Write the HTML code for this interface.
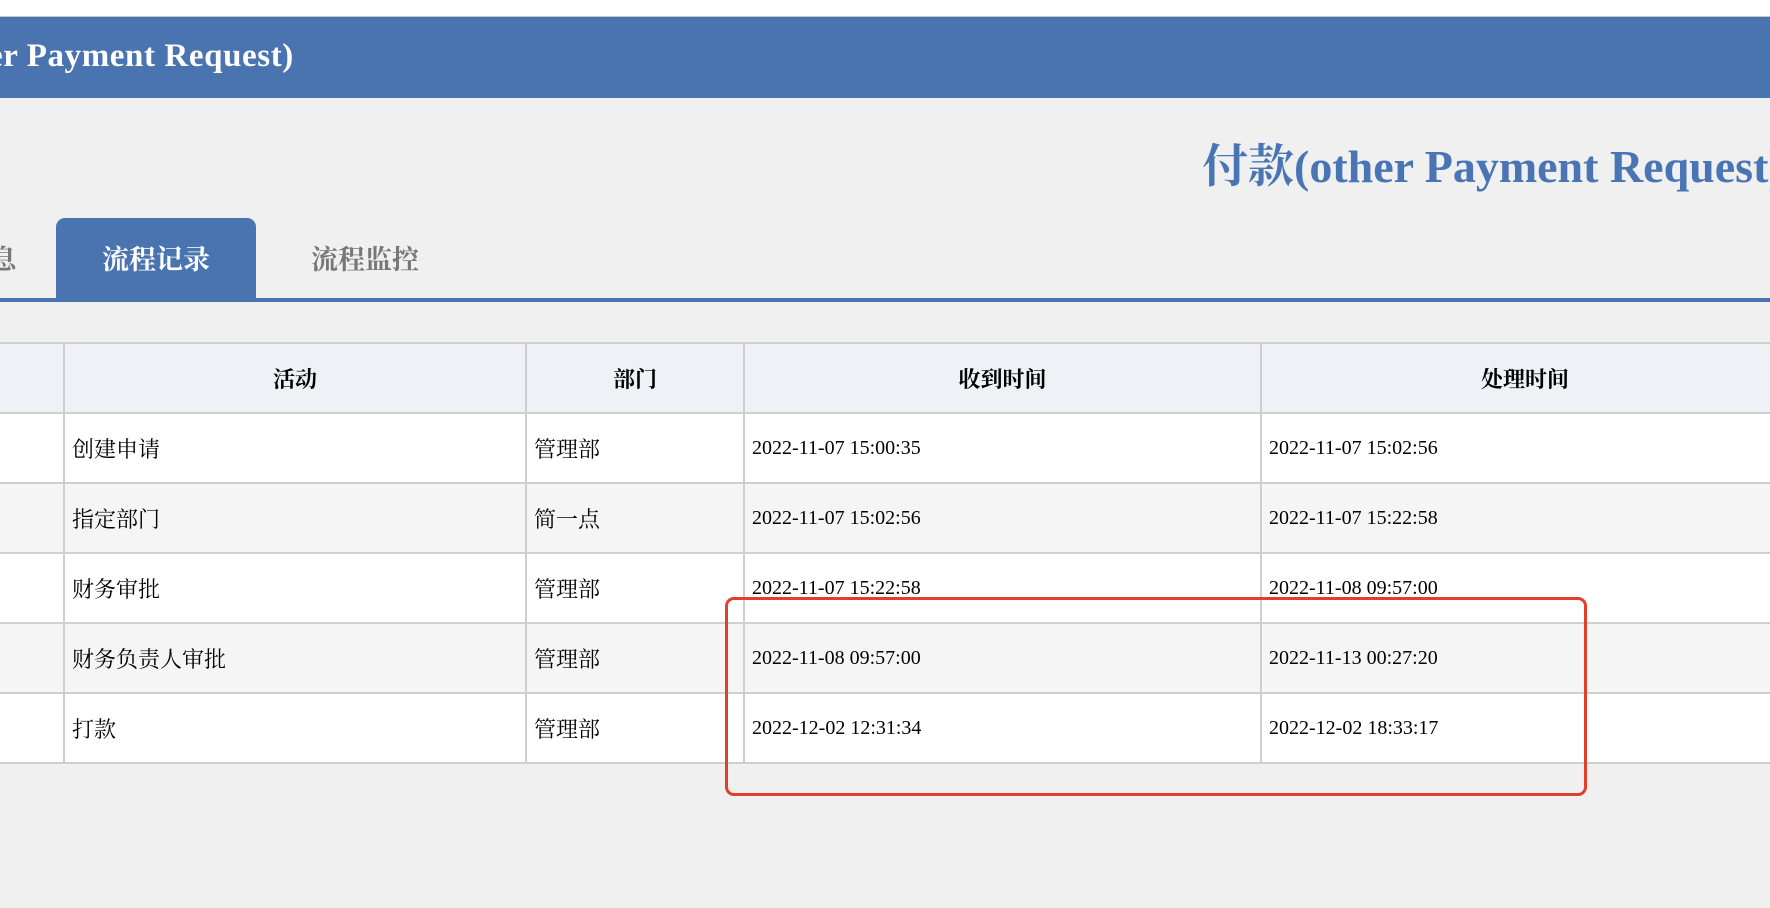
<!DOCTYPE html>
<html><head><meta charset="utf-8"><style>
body{margin:0;width:1770px;height:908px;background:#f0f0f0;overflow:hidden;position:relative;font-family:"Liberation Serif","Noto Serif CJK SC",serif;}
.top{position:absolute;left:0;top:0;width:1770px;height:16px;background:#fff;border-bottom:2px solid #c8c8c8}
.bar{position:absolute;left:0;top:17px;width:1770px;height:81px;background:#4a74b0}
.bar span{position:absolute;left:-12px;top:21px;color:#fff;font-size:33px;font-weight:bold;letter-spacing:0.6px;white-space:nowrap}
.title{position:absolute;left:1202px;top:130px;color:#4a75b4;font-size:46px;font-weight:bold;white-space:nowrap}
.tab{position:absolute;top:218px;height:81px;font-size:27px;font-weight:bold;line-height:84px;text-align:center}
.t1{left:56px;width:200px;background:#4a74b0;color:#fff;border-radius:9px 9px 0 0}
.t2{left:290px;width:150px;color:#777}
.t0{left:-12px;width:30px;color:#777}
.line{position:absolute;left:0;top:298px;width:1770px;height:4px;background:#4a74b0}
table{position:absolute;left:-10px;top:342px;border-collapse:collapse;width:1800px}
td{border:2px solid #cfcfcf;height:68px;font-size:22px;padding:0 7px;white-space:nowrap}
tr.h td{background:#eef2f6;text-align:center;font-weight:bold}
tr:nth-child(odd):not(.h) td{background:#f5f5f5}
tr:nth-child(even) td{background:#fff}
td.d{font-size:20px}
.red{position:absolute;left:725px;top:597px;width:856px;height:193px;border:3.5px solid #e0402a;border-radius:9px}
</style></head><body>
<div class="top"></div>
<div class="bar"><span>er Payment Request)</span></div>
<div class="title">付款(other Payment Request)</div>
<div class="tab t0">息</div>
<div class="tab t1">流程记录</div>
<div class="tab t2">流程监控</div>
<div class="line"></div>
<table>
<colgroup><col style="width:73px"><col style="width:462px"><col style="width:218px"><col style="width:517px"><col></colgroup>
<tr class="h"><td></td><td>活动</td><td>部门</td><td>收到时间</td><td>处理时间</td></tr>
<tr><td></td><td>创建申请</td><td>管理部</td><td class="d">2022-11-07 15:00:35</td><td class="d">2022-11-07 15:02:56</td></tr>
<tr><td></td><td>指定部门</td><td>简一点</td><td class="d">2022-11-07 15:02:56</td><td class="d">2022-11-07 15:22:58</td></tr>
<tr><td></td><td>财务审批</td><td>管理部</td><td class="d">2022-11-07 15:22:58</td><td class="d">2022-11-08 09:57:00</td></tr>
<tr><td></td><td>财务负责人审批</td><td>管理部</td><td class="d">2022-11-08 09:57:00</td><td class="d">2022-11-13 00:27:20</td></tr>
<tr><td></td><td>打款</td><td>管理部</td><td class="d">2022-12-02 12:31:34</td><td class="d">2022-12-02 18:33:17</td></tr>
</table>
<div class="red"></div>
</body></html>
